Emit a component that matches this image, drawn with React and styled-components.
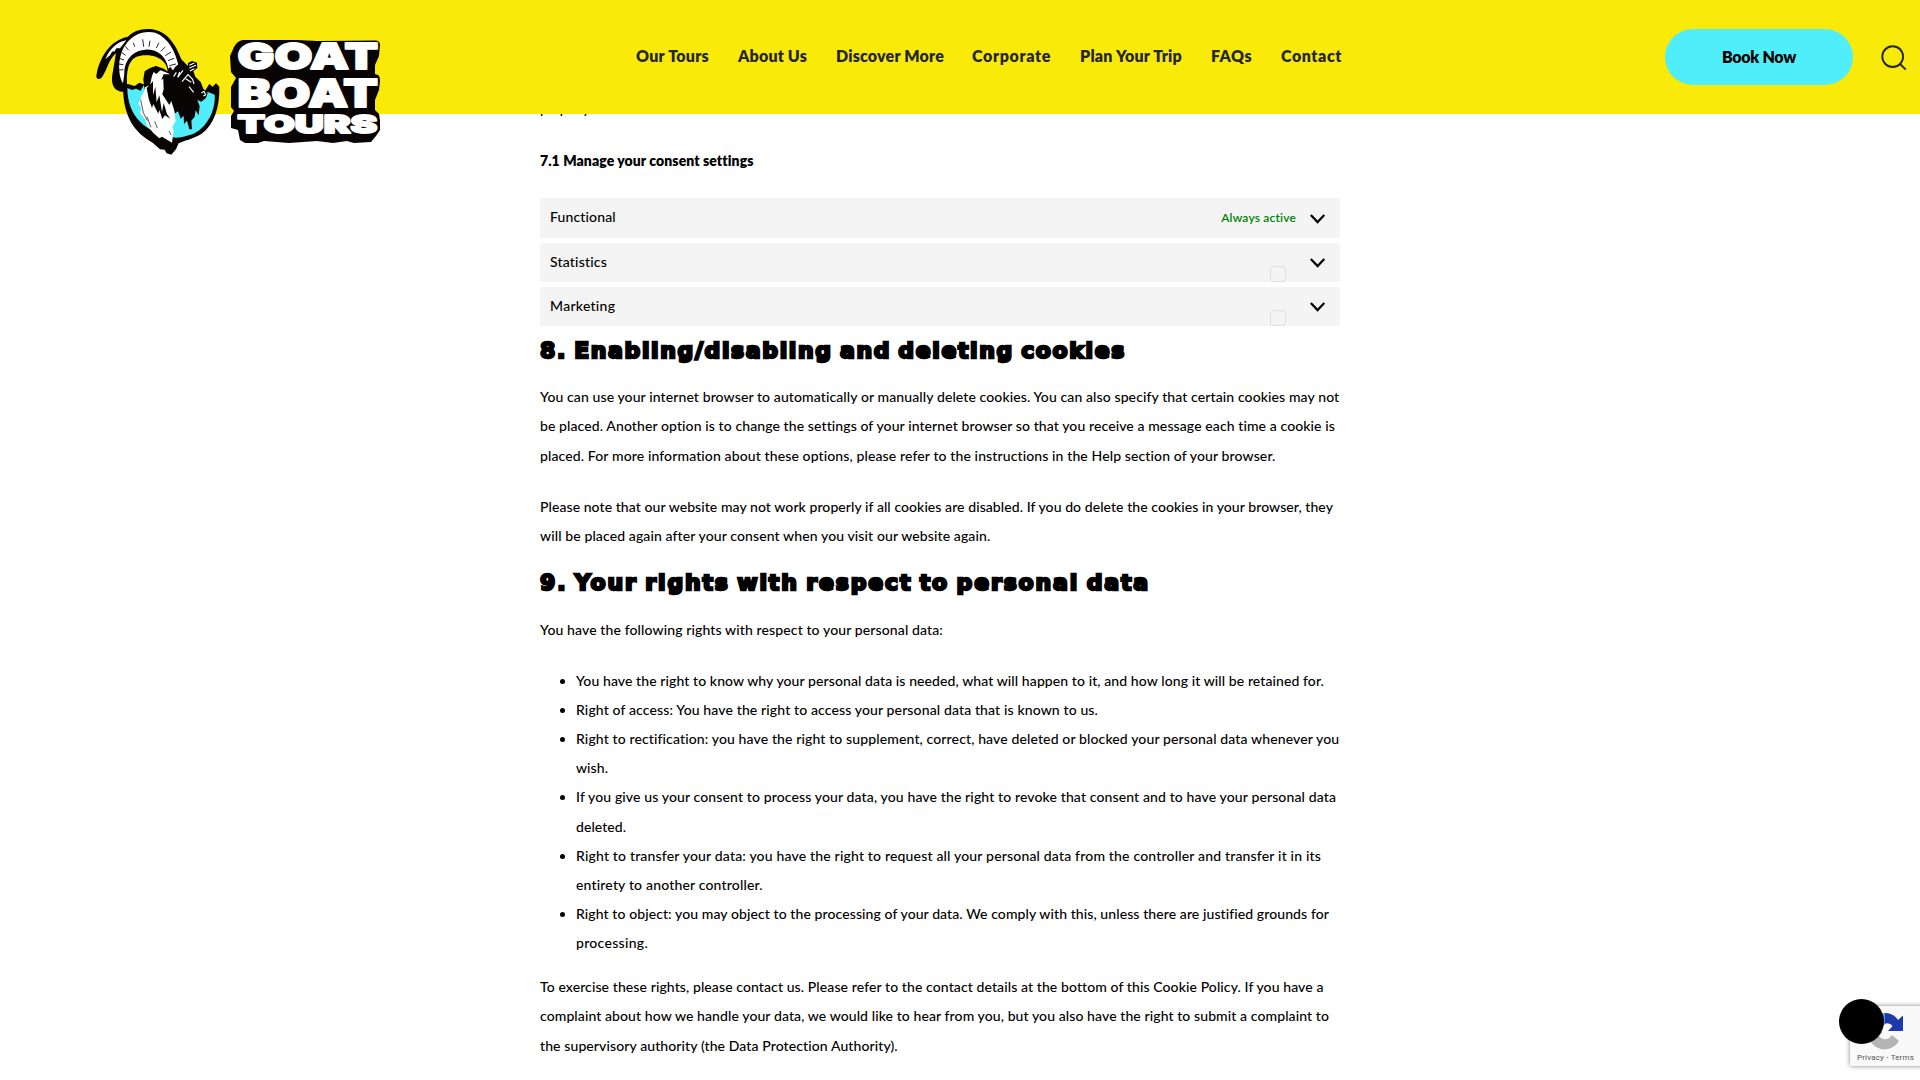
import React, { useLayoutEffect, useRef, useState } from "react";
import styled, { createGlobalStyle } from "styled-components";

const GlobalStyle = createGlobalStyle`
  *, *::before, *::after { box-sizing: border-box; }
  html, body { margin: 0; padding: 0; background: #fff; overflow: hidden; }
  body {
    font-family: Lato, "Open Sans", sans-serif;
    font-size: 14px;
    font-weight: 500;
    color: #000;
  }
`;

const Page = styled.div`
  position: relative;
  height: 1080px;
  overflow: hidden;
  background: #fff;
`;

const Header = styled.header`
  position: relative;
  z-index: 2;
  display: flex;
  align-items: flex-start;
  height: 114px;
  padding-left: 92px;
  background: #faea0a;
`;

const LogoLink = styled.a`
  display: block;
  width: 544px;
  height: 134px;
  padding-top: 24px;
`;

const LogoSvg = styled.svg`
  display: block;
  overflow: visible;
`;

const Nav = styled.nav`
  display: flex;
  height: 112px;
  width: 1029px;
  align-items: center;
`;

const NavLink = styled.a`
  flex: none;
  width: ${(p) => p.$slot}px;
  font-size: 16px;
  font-weight: 800;
  line-height: 20px;
  color: #25262f;
  white-space: nowrap;
`;

const BookButton = styled.button`
  display: flex;
  align-items: center;
  justify-content: center;
  width: 188px;
  height: 56px;
  margin-top: 29px;
  padding: 0 0 2px;
  border: 0;
  border-radius: 28px;
  background: #4feefa;
  color: #000;
  font-family: inherit;
  font-size: 16px;
  font-weight: 800;
`;

const SearchIcon = styled.svg`
  margin: 44px 0 0 27px;
`;

const Main = styled.main`
  width: 800px;
  margin: -20px 0 0 540px;
`;

const Paragraph = styled.p`
  margin: 0 0 ${(p) => p.$after || 0}px;
  line-height: 29.4px;
`;

const Line = styled.span`
  display: block;
  width: max-content;
  white-space: nowrap;
`;

const Subtitle = styled.p`
  margin: 0 0 21.6px;
  font-weight: 800;
  line-height: 30px;
`;

const Categories = styled.div`
  display: flex;
  flex-direction: column;
  gap: 5px;
`;

const Category = styled.div`
  display: flex;
  align-items: center;
  height: ${(p) => p.$height}px;
  padding: 0 15px 0 10px;
  background: #f4f4f4;
`;

const CategoryName = styled.div`
  flex: 1;
  line-height: 20px;
  padding-bottom: 2px;
`;

const AlwaysActive = styled.span`
  font-size: 12px;
  font-weight: 600;
  color: #008000;
  margin-right: 14px;
  padding-bottom: 2px;
`;

const Checkbox = styled.span`
  align-self: flex-end;
  width: 16px;
  height: 16px;
  margin-right: 24px;
  border: 1px solid #dedede;
  border-radius: 4px;
`;

const Heading = styled.h2`
  margin: 0;
  height: ${(p) => p.$height}px;
  padding-top: ${(p) => p.$top}px;
  font-family: "DejaVu Sans", sans-serif;
  font-size: 22px;
  font-weight: 700;
  line-height: 30px;
  word-spacing: -2px;
  -webkit-text-stroke: 2.4px #000;
`;

const Rights = styled.ul`
  margin: 0 0 14.8px;
  padding: 0 0 0 36px;
  line-height: 29.15px;
`;

const Right = styled.li`
  &::marker { font-size: 14px; }
`;

const Badge = styled.aside`
  position: absolute;
  left: 1850px;
  top: 1006px;
  width: 256px;
  height: 60px;
  border-radius: 2px;
  background: #f9f9f9;
  box-shadow: 0 0 5px gray;
`;

const BadgeIcon = styled.svg`
  display: block;
  margin: 6px 0 0 20px;
`;

const BadgeLinks = styled.div`
  margin: 2px 0 0 7px;
  font-family: Roboto, sans-serif;
  font-size: 8px;
  font-weight: 400;
  line-height: 10px;
  color: #555;
`;

const ChatBubble = styled.button`
  position: absolute;
  left: 1839px;
  top: 999px;
  width: 45px;
  height: 45px;
  border: 0;
  border-radius: 50%;
  background: #000;
`;

/* Tracks a single line of text out (or in) to the given measure. */
function Fit({ width, children }) {
  const ref = useRef(null);
  const [spacing, setSpacing] = useState(0);
  useLayoutEffect(() => {
    const natural = ref.current.getBoundingClientRect().width;
    setSpacing((width - natural) / children.length);
  }, [width, children]);
  return (
    <Line ref={ref} style={{ letterSpacing: `${spacing}px` }}>
      {children}
    </Line>
  );
}

const navItems = [
  ["Our Tours", 73, 102],
  ["About Us", 69, 98],
  ["Discover More", 108, 136],
  ["Corporate", 79, 108],
  ["Plan Your Trip", 102, 131],
  ["FAQs", 41, 70],
  ["Contact", 61, 62],
];

const deletingCookies = [
  ["You can use your internet browser to automatically or manually delete cookies. You can also specify that certain cookies may not", 799.5],
  ["be placed. Another option is to change the settings of your internet browser so that you receive a message each time a cookie is", 795],
  ["placed. For more information about these options, please refer to the instructions in the Help section of your browser.", 736.5],
];

const pleaseNote = [
  ["Please note that our website may not work properly if all cookies are disabled. If you do delete the cookies in your browser, they", 793],
  ["will be placed again after your consent when you visit our website again.", 450],
];

const rights = [
  [["You have the right to know why your personal data is needed, what will happen to it, and how long it will be retained for.", 748]],
  [["Right of access: You have the right to access your personal data that is known to us.", 522]],
  [
    ["Right to rectification: you have the right to supplement, correct, have deleted or blocked your personal data whenever you", 763.5],
    ["wish.", 32],
  ],
  [
    ["If you give us your consent to process your data, you have the right to revoke that consent and to have your personal data", 760],
    ["deleted.", 50],
  ],
  [
    ["Right to transfer your data: you have the right to request all your personal data from the controller and transfer it in its", 745],
    ["entirety to another controller.", 187],
  ],
  [
    ["Right to object: you may object to the processing of your data. We comply with this, unless there are justified grounds for", 753],
    ["processing.", 72],
  ],
];

const exercise = [
  ["To exercise these rights, please contact us. Please refer to the contact details at the bottom of this Cookie Policy. If you have a", 783],
  ["complaint about how we handle your data, we would like to hear from you, but you also have the right to submit a complaint to", 789],
  ["the supervisory authority (the Data Protection Authority).", 358],
];

const renderLines = (lines) =>
  lines.map(([text, width]) => (
    <Fit key={text} width={width}>
      {text}
    </Fit>
  ));

function Chevron() {
  return (
    <svg width="15" height="11" viewBox="0 0 15 11" fill="none">
      <path d="M0.8 1.9 L7.6 9.1 L14.3 1.9" stroke="#000" strokeWidth="2.2" />
    </svg>
  );
}

function Goat() {
  return (
    <g transform="scale(0.3333)">
      <path fill="#080404" d="M93 184 L108 180 L128 186 L142 176 L160 182 L338 202 L352 180 L362 188 L372 178 L382 188 C384 250 366 302 328 330 C302 346 275 350 260 358 L252 376 L238 392 L224 388 L218 377 L204 376 L182 356 C130 328 92 280 93 184Z" />
      <path fill="#4feefa" d="M106 192 L120 198 L132 194 L146 200 L155 184 L170 192 L320 202 L350 205 L368 212 C372 262 340 322 290 334 C270 341 250 343 238 339 C165 326 106 280 106 192Z" />
      <path fill="#080404" d="M14 150 C22 105 52 48 108 38 C122 22 146 13 176 15 C224 20 250 58 268 106 L290 128 L264 158 L226 150 C232 118 200 92 160 94 C120 94 100 118 106 190 L100 204 C72 204 58 190 60 158 L72 88 C52 102 44 142 28 162 C18 170 10 162 14 150Z" />
      <path fill="#fff" d="M40 106 C54 72 76 54 103 49 L84 73 L73 73 L68 82 L60 83 L54 94Z" />
      <path fill="#fff" d="M93 178 C74 146 80 88 102 61 C120 32 156 18 190 26 C230 42 250 82 260 126 L246 144 L235 128 L229 134 C222 92 190 75 160 77 C122 79 96 110 97 150Z" />
      <path stroke="#080404" strokeWidth="2.6" fill="none" d="M82 103 L96 108 M80 120 L94 122 M81 138 L94 137 M88 85 L101 94 M100 67 L110 79 M124 56 L128 68 M152 46 L155 68 M174 50 L171 68 M201 56 L193 72 M220 69 L206 82 M237 84 L220 95 M246 103 L228 110 M252 120 L232 125" />
      <path fill="#080404" d="M154 166 L158 142 L174 132 L192 126 L216 134 L236 150 L250 128 L270 112 L288 130 L288 117 L300 111 L315 116 L316 132 L304 142 L310 158 L326 174 L334 194 L347 207 L342 222 L328 233 L316 228 L323 246 L320 274 L311 259 L308 278 L298 290 L300 316 L292 316 L285 290 L276 300 L275 275 L266 284 L258 262 L246 270 L236 248 L190 270 L168 240 L158 202Z" />
      <path fill="#fff" d="M180 156 L185 144 L193 150 L205 139 L221 145 L235 151 L215 151 L208 168 L214 164 L215 196 L211 211 L232 243 L238 231 L247 260 L251 291 L241 308 L245 320 L240 356 L210 338 L202 343 L184 327 L164 303 L160 287 L144 267 L148 252 L139 239 L148 218 L155 205 L159 190 L174 183Z" />
      <path fill="#080404" d="M164 192 L183 172 L183 214 L190 188 L194 235 L202 214 L210 264 L215 237 L225 270 L235 284 L219 274 L211 285 L202 258 L199 269 L184 240 L180 252 L170 224Z" />
      <path stroke="#080404" strokeWidth="2" fill="none" d="M146 227 L154 266 L166 290 M165 278 L177 310 M188 292 L196 312 M231 321 L238 333 M225 157 L216 178" />
      <path stroke="#fff" strokeWidth="3.4" fill="none" d="M292 124 L307 117 M292 132 L312 124 M294 141 L307 134 M270 173 L288 152 L302 166 L306 180 M281 164 L298 175 M273 139 L257 160 L263 144 M328 207 L336 202 L341 212 L334 216 M291 188 L305 205 M245 158 L253 145" />
    </g>
  );
}

function LogoWord({ y, size, x = 145.6, width, children }) {
  return (
    <text
      x={x}
      y={y}
      fontFamily="Inter, sans-serif"
      fontWeight="900"
      fontSize={size}
      textLength={width}
      lengthAdjust="spacingAndGlyphs"
      fill="#fff"
      stroke="#fff"
      strokeWidth="1.8"
      strokeLinejoin="round"
    >
      {children}
    </text>
  );
}

function Logo() {
  return (
    <LogoSvg width="290" height="134" viewBox="0 0 290 134">
      <Goat />
      <path
        fill="#080404"
        d="M151 16 L174 16 L205 16 L225 17 L229 17 L284 16.5 Q288 17 288 21 L287 32 L283 41 L283 50 L286 51 Q288 52 288 57 L287 66 L283 76 L283 86 L287 90 L288 96 L288 106 L284 112 L279 118 L262 119 L255 117 L241 119 L225 117 L197 119 L172 117 L166 119 L153 119 L148 116 L146 106 L139 104 L139 92 L142 87 L139 83 L139 63 L144 54 L139 48 L138 32 L142 23 Q145 17 151 16Z"
      />
      <LogoWord y={45.4} size={36.2} width={140.4}>GOAT</LogoWord>
      <LogoWord y={83} size={38.6} width={140.4}>BOAT</LogoWord>
      <LogoWord y={109} size={24.8} width={139.6}>TOURS</LogoWord>
    </LogoSvg>
  );
}

export default function App() {
  return (
    <Page>
      <GlobalStyle />
      <Header>
        <LogoLink>
          <Logo />
        </LogoLink>
        <Nav>
          {navItems.map(([label, width, slot]) => (
            <NavLink key={label} $slot={slot}>
              <Fit width={width}>{label}</Fit>
            </NavLink>
          ))}
        </Nav>
        <BookButton>
          <Fit width={74}>Book Now</Fit>
        </BookButton>
        <SearchIcon width="28" height="28" viewBox="0 0 28 28" fill="none" stroke="#25262f" strokeWidth="1.9">
          <circle cx="12.7" cy="12.6" r="10.4" />
          <path d="M19.8 19.8 L25.8 25.6" />
        </SearchIcon>
      </Header>

      <Main>
        <Paragraph $after={23}>
          <Fit width={52}>properly.</Fit>
        </Paragraph>
        <Subtitle>
          <Fit width={213}>7.1 Manage your consent settings</Fit>
        </Subtitle>

        <Categories>
          <Category $height={40}>
            <CategoryName>
              <Fit width={66}>Functional</Fit>
            </CategoryName>
            <AlwaysActive>
              <Fit width={75}>Always active</Fit>
            </AlwaysActive>
            <Chevron />
          </Category>
          <Category $height={39}>
            <CategoryName>
              <Fit width={57.5}>Statistics</Fit>
            </CategoryName>
            <Checkbox />
            <Chevron />
          </Category>
          <Category $height={39}>
            <CategoryName>
              <Fit width={65.5}>Marketing</Fit>
            </CategoryName>
            <Checkbox />
            <Chevron />
          </Category>
        </Categories>

        <Heading $height={56} $top={10}>
          <Fit width={586}>8. Enabling/disabling and deleting cookies</Fit>
        </Heading>
        <Paragraph $after={21.8}>{renderLines(deletingCookies)}</Paragraph>
        <Paragraph>{renderLines(pleaseNote)}</Paragraph>

        <Heading $height={63.8} $top={17}>
          <Fit width={610}>9. Your rights with respect to personal data</Fit>
        </Heading>
        <Paragraph $after={21.7}>
          <Fit width={403}>You have the following rights with respect to your personal data:</Fit>
        </Paragraph>
        <Rights>
          {rights.map((lines) => (
            <Right key={lines[0][0]}>{renderLines(lines)}</Right>
          ))}
        </Rights>
        <Paragraph>{renderLines(exercise)}</Paragraph>
      </Main>

      <Badge>
        <BadgeIcon width="34" height="39" viewBox="0 0 34 39">
          <path fill="#4a90f0" d="M0 17 C0 9 7 1 16 1 V12 C12 13 10 16 10 20Z" />
          <path fill="#1c3aa9" d="M15 1 C20 1 25 3 28 8 L33 3.5 V19 H18 L22.5 14.2 C21 12 18 11 15 11.5Z" />
          <path fill="#b4b4b4" d="M0 20 H13 L9 24 C13 29 19 28 22 23 L29 29 C22 40 8 40 1 30 L-3 34Z" />
        </BadgeIcon>
        <BadgeLinks>
          <Fit width={57}>Privacy - Terms</Fit>
        </BadgeLinks>
      </Badge>
      <ChatBubble aria-label="Chat" />
    </Page>
  );
}
